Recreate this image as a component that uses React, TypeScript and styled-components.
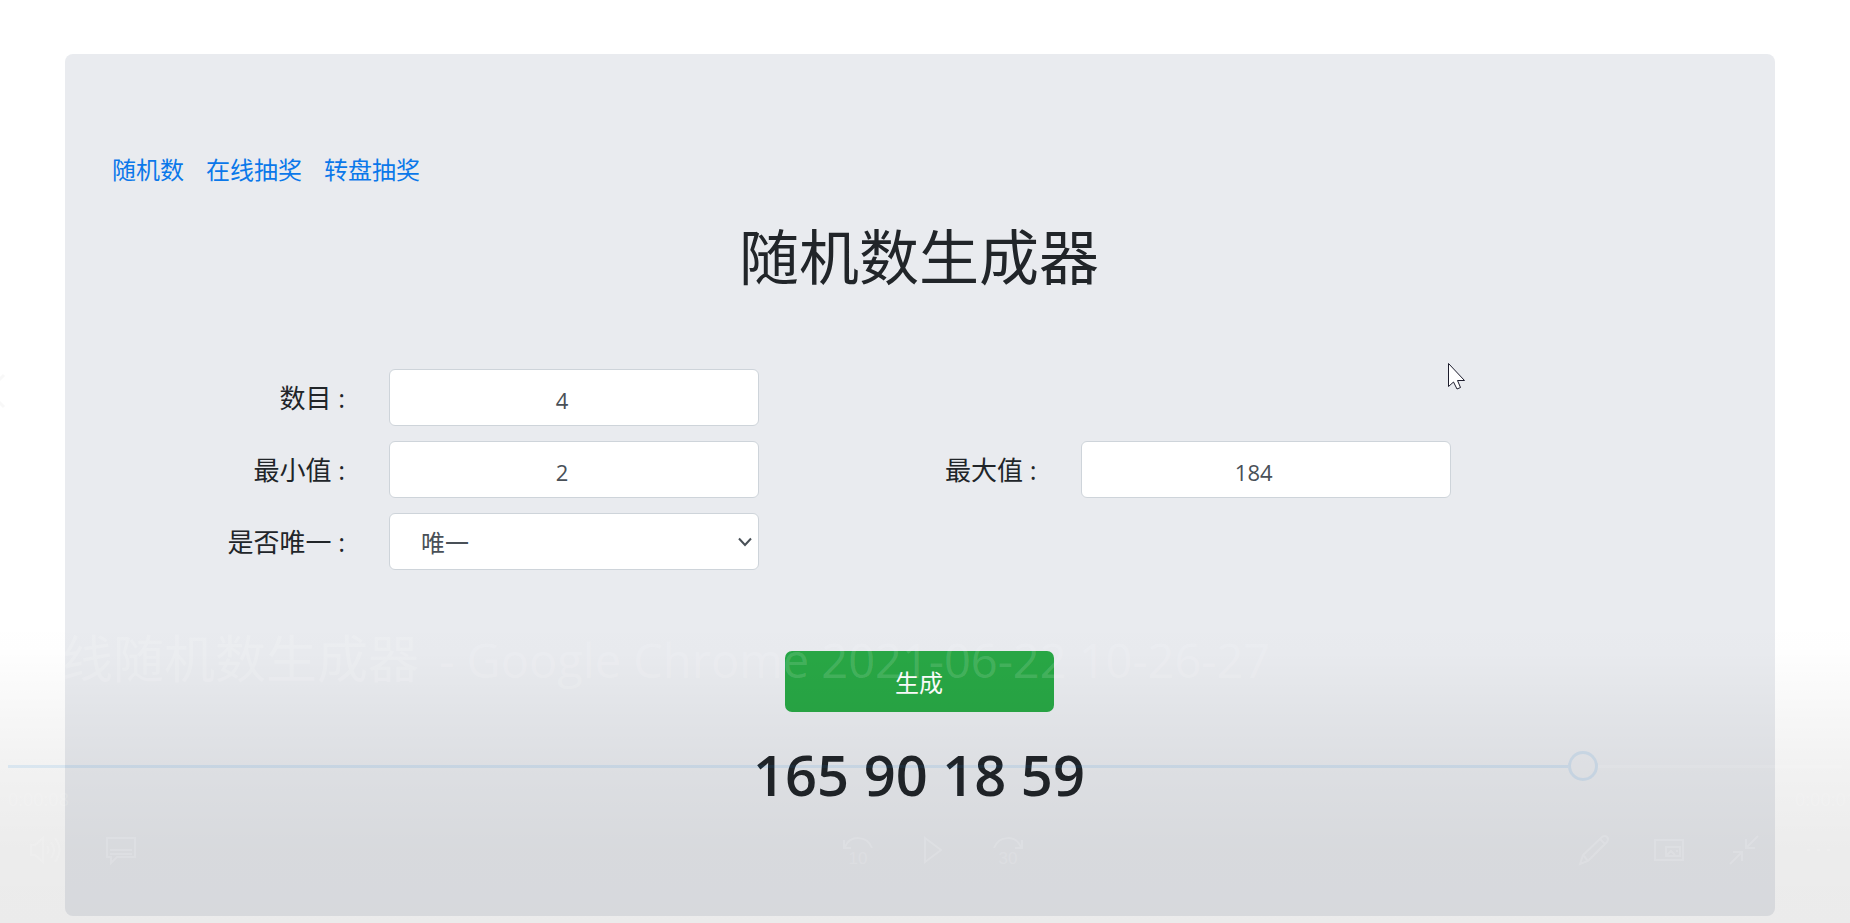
import React, { useState } from "react";
import styled, { createGlobalStyle } from "styled-components";

const GlobalStyle = createGlobalStyle`
  *, *::before, *::after { box-sizing: border-box; }
  body {
    margin: 0;
    background: #fff;
    color: #212529;
    font-family: "Open Sans", "Noto Sans CJK SC", sans-serif;
    font-size: 24px;
    line-height: 36px;
  }
`;

const Page = styled.div`
  position: relative;
  min-height: 100vh;
  padding: 54px 75px 7px 65px;
  overflow: hidden;
`;

const Panel = styled.main`
  min-height: 862px;
  padding: 98px 49px 48px 47px;
  border-radius: 8px;
  background: #e9ebef;
`;

const Nav = styled.nav`
  display: flex;
  gap: 22px;
  margin-bottom: 24px;
`;

const NavLink = styled.a`
  color: #0b78ea;
  text-decoration: none;
`;

const Title = styled.h1`
  margin: 0 0 67px;
  font-size: 60px;
  font-weight: 400;
  line-height: 90px;
  text-align: center;
`;

const Form = styled.form`
  display: flex;
  flex-direction: column;
`;

const Fields = styled.div`
  display: grid;
  grid-template-columns: 3fr 4fr;
  row-gap: 15px;
`;

const Field = styled.div<{ $alone?: boolean }>`
  display: grid;
  grid-column: ${(p) => (p.$alone ? "1 / -1" : "auto")};
  grid-template-columns: 233px 370px;
  column-gap: 44px;
  align-items: center;
`;

const Label = styled.label`
  font-size: 26px;
  text-align: right;
`;

const controlStyle = `
  width: 100%;
  height: 57px;
  border: 1px solid #ced4da;
  border-radius: 6px;
  background-color: #fff;
  color: #495057;
  font-family: inherit;
  font-size: 24px;
  line-height: 36px;
`;

const NumberInput = styled.input`
  ${controlStyle}
  padding: 4px 42px 0 18px;
  text-align: center;
  font-size: 22px;
`;

const Select = styled.select`
  ${controlStyle}
  appearance: none;
  padding: 2px 30px 0 31px;
`;

const SelectBox = styled.div`
  display: grid;
  align-items: center;
  > * { grid-area: 1 / 1; }
  > svg { justify-self: end; margin-right: 7px; pointer-events: none; }
`;

const Submit = styled.button`
  align-self: center;
  width: 269px;
  height: 61px;
  margin: 81px 0 22px;
  border: 0;
  border-radius: 7px;
  background: #28a745;
  color: #fff;
  font-family: inherit;
  font-size: 24px;
`;

const Result = styled.output`
  display: block;
  font-size: 56px;
  font-weight: 600;
  line-height: 80px;
  text-align: center;
`;

const Player = styled.section`
  position: absolute;
  inset: auto 0 0 0;
  height: 310px;
  padding: 10px 8px 0;
  color: rgba(255, 255, 255, 0.15);
  background: linear-gradient(
    rgba(0, 0, 0, 0) 0,
    rgba(0, 0, 0, 0.004) 12%,
    rgba(0, 0, 0, 0.03) 32%,
    rgba(0, 0, 0, 0.055) 52%,
    rgba(0, 0, 0, 0.075) 76%,
    rgba(0, 0, 0, 0.08) 100%
  );
`;

const PlayerTitle = styled.h2`
  margin: 0;
  padding-left: 3px;
  font-size: 51px;
  font-weight: 400;
  line-height: 70px;
  white-space: nowrap;
`;

const Latin = styled.span`
  margin-left: 8px;
  font-size: 47px;
`;

const Seek = styled.input<{ $pos: number }>`
  appearance: none;
  display: block;
  width: 100%;
  height: 30px;
  margin: 56px 0 0;
  background: none;
  &::-webkit-slider-runnable-track {
    height: 3px;
    background: linear-gradient(
      to right,
      rgba(0, 120, 215, 0.1) calc((100% - 30px) * ${(p) => p.$pos}),
      transparent 0 calc((100% - 30px) * ${(p) => p.$pos} + 30px),
      rgba(255, 255, 255, 0.08) 0
    );
  }
  &::-webkit-slider-thumb {
    appearance: none;
    width: 30px;
    height: 30px;
    margin-top: -14px;
    border: 3px solid rgba(0, 120, 215, 0.1);
    border-radius: 50%;
    background: transparent;
  }
`;

const Times = styled.div`
  display: flex;
  justify-content: space-between;
  margin-right: -14px;
  padding-top: 4px;
  font-size: 18px;
  line-height: 28px;
`;

const Controls = styled.div`
  display: grid;
  grid-template-columns: 1fr auto 1fr;
  align-items: center;
  margin-top: 21px;
`;

const Group = styled.div<{ $side?: "start" | "end" }>`
  display: flex;
  gap: 43px;
  justify-content: ${(p) => (p.$side === "end" ? "flex-end" : "flex-start")};
  padding: ${(p) => (p.$side === "end" ? "0 7px 0 0" : p.$side === "start" ? "0 0 0 22px" : "0 0 0 16px")};
`;

const IconButton = styled.button`
  display: flex;
  padding: 0;
  border: 0;
  background: none;
  color: inherit;
  > svg { overflow: visible; }
`;

const Pointer = styled.svg`
  position: absolute;
  left: 1447px;
  top: 362px;
`;

const Previous = styled.svg`
  position: absolute;
  left: 0;
  top: 373px;
`;

const Icon = ({ label, children }: { label: string; children: React.ReactNode }) => (
  <IconButton type="button" aria-label={label}>
    <svg width="32" height="32" viewBox="0 0 32 32" fill="none" stroke="currentColor" strokeWidth="2">
      {children}
    </svg>
  </IconButton>
);

const links = ["随机数", "在线抽奖", "转盘抽奖"];
const seekPos = 0.865;

export default function App() {
  const [numbers, setNumbers] = useState([165, 90, 18, 59]);
  const generate = (e: React.FormEvent<HTMLFormElement>) => {
    e.preventDefault();
    const data = new FormData(e.currentTarget);
    const count = Number(data.get("count"));
    const min = Number(data.get("min"));
    const max = Number(data.get("max"));
    const unique = data.get("unique") === "yes";
    const out: number[] = [];
    const total = unique ? Math.min(count, max - min + 1) : count;
    while (out.length < total) {
      const n = min + Math.floor(Math.random() * (max - min + 1));
      if (!unique || !out.includes(n)) out.push(n);
    }
    setNumbers(out);
  };

  return (
    <>
      <GlobalStyle />
      <Page>
        <Panel>
          <Nav>
            {links.map((text) => (
              <NavLink key={text} href="#">{text}</NavLink>
            ))}
          </Nav>
          <Title>随机数生成器</Title>
          <Form onSubmit={generate}>
            <Fields>
              <Field $alone>
                <Label htmlFor="count">数目 :</Label>
                <NumberInput id="count" name="count" inputMode="numeric" defaultValue="4" />
              </Field>
              <Field>
                <Label htmlFor="min">最小值 :</Label>
                <NumberInput id="min" name="min" inputMode="numeric" defaultValue="2" />
              </Field>
              <Field>
                <Label htmlFor="max">最大值 :</Label>
                <NumberInput id="max" name="max" inputMode="numeric" defaultValue="184" />
              </Field>
              <Field $alone>
                <Label htmlFor="unique">是否唯一 :</Label>
                <SelectBox>
                  <Select id="unique" name="unique" defaultValue="yes">
                    <option value="yes">唯一</option>
                    <option value="no">不唯一</option>
                  </Select>
                  <svg width="14" height="10" viewBox="0 0 14 10" fill="none" stroke="#495057" strokeWidth="2">
                    <path d="M1 1.5 7 8l6-6.5" />
                  </svg>
                </SelectBox>
              </Field>
            </Fields>
            <Submit type="submit">生成</Submit>
          </Form>
          <Result>{numbers.join(" ")}</Result>
        </Panel>

        <Player>
          <PlayerTitle>
            在线随机数生成器<Latin> - Google Chrome 2021-06-22 10-26-27</Latin>
          </PlayerTitle>
          <Seek type="range" aria-label="进度" min="0" max="1000" defaultValue={seekPos * 1000} $pos={seekPos} />
          <Times>
            <span>0:00:08</span>
            <span>0:00:01</span>
          </Times>
          <Controls>
            <Group $side="start">
              <Icon label="音量">
                <path d="M1 11h4l8-7v24l-8-7H1zM17 12q3 4 0 8M21 8q6 8 0 16M25 4q9 12 0 24" />
              </Icon>
              <Icon label="字幕">
                <path d="M2 4h28v19H12l-6 6v-6H2zM5 16h22M5 20h22" />
              </Icon>
            </Group>
            <Group>
              <Icon label="后退 10 秒">
                <path d="M30 14C25 1 8 1 3 13M2 6v8h7" />
                <text x="16" y="30" fontSize="17" fill="currentColor" stroke="none" textAnchor="middle">10</text>
              </Icon>
              <Icon label="播放">
                <path d="M8 4v24l16-12z" />
              </Icon>
              <Icon label="前进 30 秒">
                <path d="M2 14C7 1 24 1 29 13M30 6v8h-7" />
                <text x="16" y="30" fontSize="17" fill="currentColor" stroke="none" textAnchor="middle">30</text>
              </Icon>
            </Group>
            <Group $side="end">
              <Icon label="编辑">
                <path d="M2 30l3-9L24 3q3-2 5 0t0 5L10 27zM22 5l5 5M5 21l5 6" />
              </Icon>
              <Icon label="小窗播放">
                <path d="M2 6h28v20H2zM13 13h14v9H13zM14 21l4-4 4 4M23 17h2" />
              </Icon>
              <Icon label="退出全屏">
                <path d="M30 2 19 13M18 5v9h9M2 30l11-11M5 18h9v9" />
              </Icon>
              <Icon label="更多">
                <path d="M4 16h3M14 16h3M24 16h3" />
              </Icon>
            </Group>
          </Controls>
        </Player>

        <Previous width="6" height="36" viewBox="0 0 6 36" fill="none" stroke="#f8f8f8" strokeWidth="3">
          <path d="M-12 18 4 2M-12 18 4 34" />
        </Previous>
        <Pointer width="20" height="29" viewBox="0 0 20 29" fill="#fff" stroke="#1c1c2c" strokeWidth="1">
          <path d="M1.500 1.500v23l5-4.500 3.500 7 3.500-1.500-3-7h7z" />
        </Pointer>
      </Page>
    </>
  );
}
